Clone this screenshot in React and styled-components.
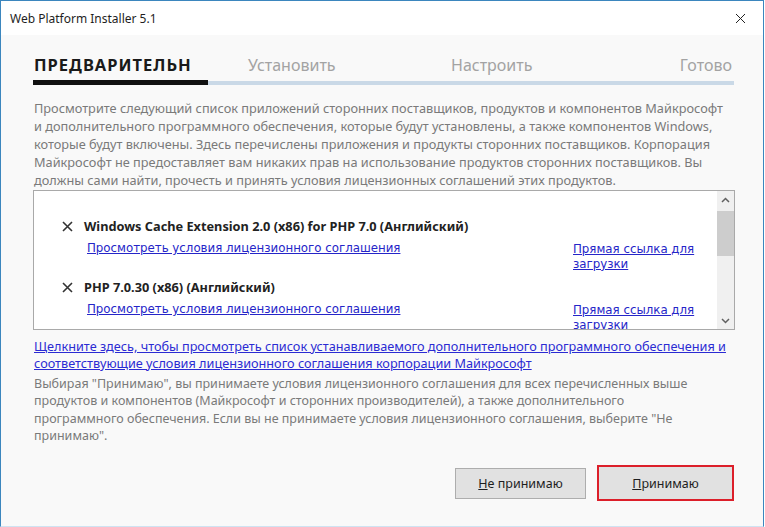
import React from "react";
import styled, { createGlobalStyle } from "styled-components";

const GlobalStyle = createGlobalStyle`
  html, body {
    margin: 0;
    padding: 0;
    background: #ffffff;
  }
  body {
    font-family: "Noto Sans", "Open Sans", sans-serif;
  }
`;

const uiFont = `"Noto Sans", "Open Sans", sans-serif`;
const listFont = `"DejaVu Sans", "Liberation Sans", sans-serif`;

const Window = styled.div`
  width: 764px;
  height: 527px;
  box-sizing: border-box;
  border: 1px solid #3b86be;
  border-bottom-color: #cfe3f2;
  background: #f9f9f9;
  display: flex;
  flex-direction: column;
  overflow: hidden;
`;

const TitleBar = styled.div`
  height: 34px;
  background: #ffffff;
  display: flex;
  align-items: center;
  justify-content: space-between;
  padding: 0 8px 0 9px;
`;

const Caption = styled.span`
  font-family: ${uiFont};
  font-size: 12px;
  color: #1e1e1e;
`;

const CloseButton = styled.button`
  width: 30px;
  height: 30px;
  border: none;
  background: transparent;
  display: flex;
  align-items: center;
  justify-content: center;
  padding: 0;
  cursor: pointer;
`;

const Body = styled.div`
  flex: 1;
  padding: 19px 29px 0 32px;
  display: flex;
  flex-direction: column;
`;

const Steps = styled.div`
  display: grid;
  grid-template-columns: 214px 203px 1fr auto;
  padding-right: 2px;
`;

const Step = styled.div`
  font-family: ${uiFont};
  font-size: ${(p) => (p.$active ? "16.5px" : "16px")};
  letter-spacing: ${(p) => (p.$active ? "1px" : "0")};
  line-height: 22px;
  font-weight: ${(p) => (p.$active ? 700 : 400)};
  color: ${(p) => (p.$active ? "#1a1a1a" : "#a3a3a3")};
  padding-left: 1px;
  white-space: nowrap;
`;

const Progress = styled.div`
  margin-top: 4px;
  height: 5px;
  display: flex;
  align-items: center;
`;

const ProgressFill = styled.div`
  height: 5px;
  background: #111111;
`;

const ProgressTrack = styled.div`
  flex: 1;
  height: 4px;
  background: #cad9e7;
`;

const Intro = styled.p`
  margin: 14px 0 0 1px;
  font-family: ${uiFont};
  font-size: 12.75px;
  line-height: 18px;
  color: #7a7a7a;
  white-space: nowrap;
`;

const ListBox = styled.div`
  margin: 1px -1px 0 0;
  height: 140px;
  box-sizing: border-box;
  border: 1px solid #a9a9a9;
  background: #ffffff;
  display: flex;
`;

const ListItems = styled.div`
  flex: 1;
  overflow: hidden;
  padding: 26px 0 0 28px;
  display: flex;
  flex-direction: column;
  gap: 7px;
`;

const Item = styled.div`
  display: grid;
  grid-template-columns: 22px 489px 1fr;
  row-gap: 5px;
`;

const RemoveIcon = styled.span`
  display: flex;
  align-items: center;
  height: 18px;
`;

const ItemTitle = styled.div`
  grid-column: 2 / 4;
  font-family: ${uiFont};
  font-size: 12.75px;
  line-height: 18px;
  font-weight: 700;
  color: #222222;
  white-space: nowrap;
`;

const LinkCell = styled.div`
  grid-column: ${(p) => (p.$download ? 3 : 2)};
  padding-left: ${(p) => (p.$download ? "0" : "3px")};
  padding-top: ${(p) => (p.$download ? "2px" : "0")};
  width: ${(p) => (p.$download ? "132px" : "auto")};
  font-family: ${listFont};
  font-size: 11.8px;
  line-height: ${(p) => (p.$download ? "14.5px" : "16px")};
`;

const ListLink = styled.a`
  color: #2525c8;
  text-decoration: underline;
  cursor: pointer;
`;

const Scrollbar = styled.div`
  width: 17px;
  background: #f0f0f0;
  display: flex;
  flex-direction: column;
  align-items: center;
`;

const ScrollArrow = styled.div`
  height: 17px;
  width: 17px;
  display: flex;
  align-items: center;
  justify-content: center;
`;

const ScrollThumb = styled.div`
  width: 17px;
  height: 45px;
  margin-top: 3px;
  background: #cdcdcd;
`;

const ScrollSpace = styled.div`
  flex: 1;
`;

const MoreLink = styled.a`
  display: block;
  margin: 8px 0 0 1px;
  font-family: ${uiFont};
  font-size: 12.7px;
  line-height: 17px;
  color: #2b2bd3;
  text-decoration: underline;
  white-space: nowrap;
  cursor: pointer;
`;

const Notice = styled.p`
  margin: 3px 0 0 1px;
  font-family: ${uiFont};
  font-size: 12.5px;
  line-height: 17.3px;
  color: #7a7a7a;
  white-space: nowrap;
`;

const Actions = styled.div`
  margin-top: auto;
  margin-bottom: 25px;
  display: flex;
  justify-content: flex-end;
  align-items: center;
  gap: 11px;
`;

const Button = styled.button`
  box-sizing: border-box;
  width: ${(p) => (p.$default ? "137px" : "131px")};
  height: ${(p) => (p.$default ? "36px" : "31px")};
  border: ${(p) => (p.$default ? "2px solid #dc1f2a" : "1px solid #adadad")};
  background: #e1e1e1;
  font-family: ${uiFont};
  font-size: 12.5px;
  color: #1e1e1e;
  padding: 0;
  cursor: pointer;
`;

const Key = styled.span`
  text-decoration: underline;
`;

const Cross = ({ size = 11, stroke = 1.6, color = "#333" }) => (
  <svg width={size} height={size} viewBox="0 0 11 11">
    <path d="M1 1 L10 10 M10 1 L1 10" stroke={color} strokeWidth={stroke} fill="none" />
  </svg>
);

const Chevron = ({ up }) => (
  <svg width="9" height="6" viewBox="0 0 9 6">
    <path
      d={up ? "M1 5 L4.5 1.5 L8 5" : "M1 1 L4.5 4.5 L8 1"}
      stroke="#606060"
      strokeWidth="1.5"
      fill="none"
    />
  </svg>
);

const products = [
  "Windows Cache Extension 2.0 (x86) for PHP 7.0 (Английский)",
  "PHP 7.0.30 (x86) (Английский)",
];

const steps = ["ПРЕДВАРИТЕЛЬН", "Установить", "Настроить", "Готово"];

export default function App() {
  return (
    <>
      <GlobalStyle />
      <Window>
        <TitleBar>
          <Caption>Web Platform Installer 5.1</Caption>
          <CloseButton aria-label="Закрыть">
            <Cross size={11} stroke={1} color="#222" />
          </CloseButton>
        </TitleBar>
        <Body>
          <Steps>
            {steps.map((s, i) => (
              <Step key={s} $active={i === 0}>
                {s}
              </Step>
            ))}
          </Steps>
          <Progress>
            <ProgressFill style={{ width: 175 }} />
            <ProgressTrack />
          </Progress>
          <Intro>
            Просмотрите следующий список приложений сторонних поставщиков, продуктов и компонентов Майкрософт
            <br />
            и дополнительного программного обеспечения, которые будут установлены, а также компонентов Windows,
            <br />
            которые будут включены. Здесь перечислены приложения и продукты сторонних поставщиков. Корпорация
            <br />
            Майкрософт не предоставляет вам никаких прав на использование продуктов сторонних поставщиков. Вы
            <br />
            должны сами найти, прочесть и принять условия лицензионных соглашений этих продуктов.
          </Intro>
          <ListBox>
            <ListItems>
              {products.map((p) => (
                <Item key={p}>
                  <RemoveIcon>
                    <Cross />
                  </RemoveIcon>
                  <ItemTitle>{p}</ItemTitle>
                  <LinkCell>
                    <ListLink>Просмотреть условия лицензионного соглашения</ListLink>
                  </LinkCell>
                  <LinkCell $download>
                    <ListLink>Прямая ссылка для загрузки</ListLink>
                  </LinkCell>
                </Item>
              ))}
            </ListItems>
            <Scrollbar>
              <ScrollArrow>
                <Chevron up />
              </ScrollArrow>
              <ScrollThumb />
              <ScrollSpace />
              <ScrollArrow>
                <Chevron />
              </ScrollArrow>
            </Scrollbar>
          </ListBox>
          <MoreLink>
            Щелкните здесь, чтобы просмотреть список устанавливаемого дополнительного программного обеспечения и
            <br />
            соответствующие условия лицензионного соглашения корпорации Майкрософт
          </MoreLink>
          <Notice>
            Выбирая "Принимаю", вы принимаете условия лицензионного соглашения для всех перечисленных выше
            <br />
            продуктов и компонентов (Майкрософт и сторонних производителей), а также дополнительного
            <br />
            программного обеспечения. Если вы не принимаете условия лицензионного соглашения, выберите "Не
            <br />
            принимаю".
          </Notice>
          <Actions>
            <Button>
              <Key>Н</Key>е принимаю
            </Button>
            <Button $default>
              <Key>П</Key>ринимаю
            </Button>
          </Actions>
        </Body>
      </Window>
    </>
  );
}
